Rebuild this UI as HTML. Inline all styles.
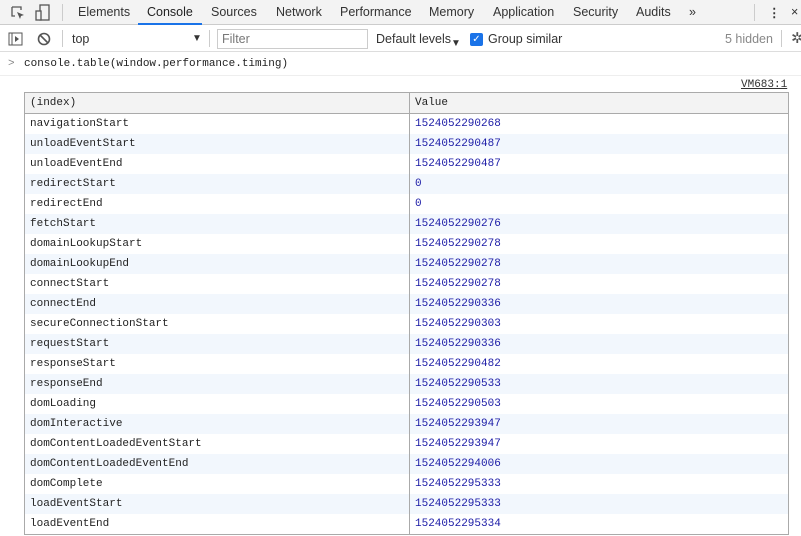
<!DOCTYPE html>
<html><head><style>
*{margin:0;padding:0;box-sizing:border-box}
body{width:801px;height:536px;overflow:hidden;background:#fff;font-family:"Liberation Sans",sans-serif;font-size:12.5px;color:#333;position:relative}
.tabs{position:absolute;left:0;top:0;width:801px;height:25px;background:#f3f3f3;border-bottom:1px solid #ccc}
.tabs span{position:absolute;top:5px;font-size:12.5px;color:#333}
.tb{position:absolute;left:0;top:26px;width:801px;height:26px;background:#fff;border-bottom:1px solid #ddd}
.tb span{position:absolute;top:6px}
.cl{position:absolute;left:0;top:53px;width:801px;height:23px;border-bottom:1px solid #eee;font-family:"Liberation Mono",monospace;font-size:11px}
table{position:absolute;left:24px;top:92px;width:765px;border-collapse:collapse;font-family:"Liberation Mono",monospace;font-size:11px;border:1px solid #aaa}
td{height:20px;padding:0 5px;white-space:nowrap;line-height:20px}
td:first-child{width:385px;border-right:1px solid #aaa;color:#222}
td+td{color:#1a1aa6}
tr.h td{background:#f3f3f3;border-bottom:1px solid #aaa;color:#222}
tr:nth-child(odd):not(.h) td{background:#f2f7fd}
</style></head><body>
<div class="tabs">
<svg style="position:absolute;left:10px;top:5px" width="16" height="16" viewBox="0 0 16 16"><path d="M2 2h9v3M2 2v9h3" fill="none" stroke="#555" stroke-width="1.3"/><path d="M7 7l7 3-3 1-1 3z" fill="#555"/></svg>
<svg style="position:absolute;left:35px;top:4px" width="16" height="17" viewBox="0 0 16 17"><rect x="5" y="1" width="9" height="15" fill="none" stroke="#555" stroke-width="1.3"/><rect x="1" y="7" width="5" height="9" fill="#f3f3f3" stroke="#555" stroke-width="1.3"/></svg>
<div style="position:absolute;left:62px;top:4px;width:1px;height:17px;background:#ccc"></div>
<span style="left:78px">Elements</span>
<span style="left:147px;color:#222">Console</span>
<div style="position:absolute;left:138px;top:23px;width:64px;height:2px;background:#1a73e8"></div>
<span style="left:211px">Sources</span>
<span style="left:276px">Network</span>
<span style="left:340px">Performance</span>
<span style="left:429px">Memory</span>
<span style="left:493px">Application</span>
<span style="left:573px">Security</span>
<span style="left:636px">Audits</span>
<span style="left:689px">»</span>
<div style="position:absolute;left:754px;top:4px;width:1px;height:17px;background:#ccc"></div>
<span style="left:768px;font-weight:bold">⋮</span>
<span style="left:791px">×</span>
</div>
<div class="tb">
<svg style="position:absolute;left:8px;top:6px" width="15" height="14" viewBox="0 0 15 14"><rect x="1" y="1" width="13" height="12" fill="none" stroke="#555"/><path d="M4 1v12" stroke="#555"/><path d="M7 4l4 3-4 3z" fill="#555"/></svg>
<svg style="position:absolute;left:37px;top:6px" width="14" height="14" viewBox="0 0 14 14"><circle cx="7" cy="7" r="5.5" fill="none" stroke="#555" stroke-width="1.6"/><path d="M3 3l8 8" stroke="#555" stroke-width="1.6"/></svg>
<div style="position:absolute;left:62px;top:4px;width:1px;height:17px;background:#ccc"></div>
<span style="left:72px">top</span>
<span style="left:192px;font-size:10px;top:7px">▼</span>
<div style="position:absolute;left:209px;top:4px;width:1px;height:17px;background:#ccc"></div>
<div style="position:absolute;left:217px;top:3px;width:151px;height:20px;border:1px solid #ccc"></div>
<span style="left:222px;color:#777">Filter</span>
<span style="left:376px">Default levels <span style="font-size:10px">▼</span></span>
<div style="position:absolute;left:470px;top:7px;width:13px;height:13px;background:#1a73e8;border-radius:2px;color:#fff;font-size:10px;line-height:13px;text-align:center">✓</div>
<span style="left:488px">Group similar</span>
<span style="left:725px;color:#888">5 hidden</span>
<div style="position:absolute;left:781px;top:4px;width:1px;height:17px;background:#ccc"></div>
<span style="left:791px;font-size:15px;top:3px;color:#555">✲</span>
</div>
<div class="cl"><span style="position:absolute;left:8px;top:5px;color:#888">&gt;</span><span style="position:absolute;left:24px;top:5px;color:#222">console.table(window.performance.timing)</span></div>
<div style="position:absolute;left:741px;top:79px;font-family:'Liberation Mono',monospace;font-size:11px;text-decoration:underline;color:#333">VM683:1</div>
<table>
<tr class="h"><td>(index)</td><td style="color:#222">Value</td></tr>
<tr><td>navigationStart</td><td>1524052290268</td></tr>
<tr><td>unloadEventStart</td><td>1524052290487</td></tr>
<tr><td>unloadEventEnd</td><td>1524052290487</td></tr>
<tr><td>redirectStart</td><td>0</td></tr>
<tr><td>redirectEnd</td><td>0</td></tr>
<tr><td>fetchStart</td><td>1524052290276</td></tr>
<tr><td>domainLookupStart</td><td>1524052290278</td></tr>
<tr><td>domainLookupEnd</td><td>1524052290278</td></tr>
<tr><td>connectStart</td><td>1524052290278</td></tr>
<tr><td>connectEnd</td><td>1524052290336</td></tr>
<tr><td>secureConnectionStart</td><td>1524052290303</td></tr>
<tr><td>requestStart</td><td>1524052290336</td></tr>
<tr><td>responseStart</td><td>1524052290482</td></tr>
<tr><td>responseEnd</td><td>1524052290533</td></tr>
<tr><td>domLoading</td><td>1524052290503</td></tr>
<tr><td>domInteractive</td><td>1524052293947</td></tr>
<tr><td>domContentLoadedEventStart</td><td>1524052293947</td></tr>
<tr><td>domContentLoadedEventEnd</td><td>1524052294006</td></tr>
<tr><td>domComplete</td><td>1524052295333</td></tr>
<tr><td>loadEventStart</td><td>1524052295333</td></tr>
<tr><td>loadEventEnd</td><td>1524052295334</td></tr>
</table>
</body></html>
